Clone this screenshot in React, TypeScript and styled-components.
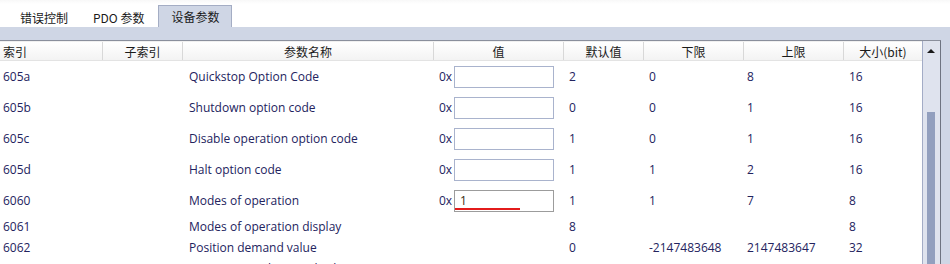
import React from "react";
import styled, { createGlobalStyle } from "styled-components";

const GlobalStyle = createGlobalStyle`
  html, body {
    margin: 0;
    padding: 0;
    background: #ffffff;
  }
  body {
    font-family: "Open Sans", "Noto Sans CJK SC", sans-serif;
    font-size: 12px;
    color: #23235e;
  }
`;

type Row = {
  index: string;
  name: string;
  hasInput: boolean;
  value?: string;
  marked?: boolean;
  def: string;
  min: string;
  max: string;
  size: string;
};

const rows: Row[] = [
  { index: "605a", name: "Quickstop Option Code", hasInput: true, def: "2", min: "0", max: "8", size: "16" },
  { index: "605b", name: "Shutdown option code", hasInput: true, def: "0", min: "0", max: "1", size: "16" },
  { index: "605c", name: "Disable operation option code", hasInput: true, def: "1", min: "0", max: "1", size: "16" },
  { index: "605d", name: "Halt option code", hasInput: true, def: "1", min: "1", max: "2", size: "16" },
  { index: "6060", name: "Modes of operation", hasInput: true, value: "1", marked: true, def: "1", min: "1", max: "7", size: "8" },
  { index: "6061", name: "Modes of operation display", hasInput: false, def: "8", min: "", max: "", size: "8" },
  { index: "6062", name: "Position demand value", hasInput: false, def: "0", min: "-2147483648", max: "2147483647", size: "32" },
  { index: "6063", name: "Position actual internal value", hasInput: false, def: "0", min: "-2147483648", max: "2147483647", size: "32" },
];

const tabs = ["错误控制", "PDO 参数", "设备参数"];
const COLS = "103px 80px 251px 130px 80px 100px 100px 78px";

export default function App() {
  return (
    <Page>
      <GlobalStyle />
      <TabStrip>
        {tabs.map((t, i) => (
          <Tab key={t} $active={i === 2}>
            {t}
          </Tab>
        ))}
      </TabStrip>
      <Band>
        <Frame>
          <Table>
            <HeaderRow>
              <HeadCell $align="left">索引</HeadCell>
              <HeadCell>子索引</HeadCell>
              <HeadCell>参数名称</HeadCell>
              <HeadCell>值</HeadCell>
              <HeadCell>默认值</HeadCell>
              <HeadCell>下限</HeadCell>
              <HeadCell>上限</HeadCell>
              <HeadCell>大小(bit)</HeadCell>
            </HeaderRow>
            {rows.map((r) => (
              <DataRow key={r.index} $tall={r.hasInput}>
                <Cell>{r.index}</Cell>
                <Cell />
                <Cell $pad={6}>{r.name}</Cell>
                <ValueCell>
                  {r.hasInput && (
                    <>
                      <Prefix>0x</Prefix>
                      <ValueBox $focused={!!r.marked}>
                        {r.value}
                        {r.marked && <Squiggle />}
                      </ValueBox>
                    </>
                  )}
                </ValueCell>
                <Cell $pad={5}>{r.def}</Cell>
                <Cell $pad={5}>{r.min}</Cell>
                <Cell $pad={3}>{r.max}</Cell>
                <Cell $pad={5}>{r.size}</Cell>
              </DataRow>
            ))}
          </Table>
          <ScrollBar>
            <ArrowUp />
            <Thumb />
          </ScrollBar>
        </Frame>
      </Band>
    </Page>
  );
}

const Page = styled.div`
  width: 950px;
  height: 264px;
  overflow: hidden;
  display: flex;
  flex-direction: column;
`;

const TabStrip = styled.div`
  height: 27px;
  display: flex;
  align-items: flex-end;
  padding-left: 7px;
  background: linear-gradient(#f8f8f8 0, #ffffff 4px);
  font-family: "Noto Sans CJK SC", "Open Sans", sans-serif;
  font-size: 12px;
  color: #1a1a1a;
`;

const Tab = styled.div<{ $active?: boolean }>`
  height: ${(p) => (p.$active ? "22px" : "20px")};
  padding: 0 12px;
  display: flex;
  align-items: center;
  box-sizing: border-box;
  background: ${(p) => (p.$active ? "#cfd6e5" : "transparent")};
  border: 1px solid ${(p) => (p.$active ? "#a4adc4" : "transparent")};
  border-bottom: none;
  &:nth-child(2) {
    padding: 0 13px 0 11px;
  }
  &:nth-child(3) {
    padding: 0 12px;
    min-width: 72px;
    padding-bottom: 1px;
  }
`;

const Band = styled.div`
  flex: 1;
  background: #cfd6e5;
  padding: 13px 9px 0 0;
  display: flex;
  min-height: 0;
`;

const Frame = styled.div`
  flex: 1;
  display: flex;
  background: #ffffff;
  border-top: 1px solid #8a8f9c;
  border-right: 1px solid #6e7380;
  min-height: 0;
  overflow: hidden;
`;

const Table = styled.div`
  width: 922px;
  display: flex;
  flex-direction: column;
`;

const HeaderRow = styled.div`
  display: grid;
  grid-template-columns: ${COLS};
  height: 21px;
  background: linear-gradient(#ffffff, #f3f3f3);
  border-top: 1px solid #f0f0f0;
  border-bottom: 1px solid #e3e3e3;
  box-sizing: border-box;
  font-family: "Noto Sans CJK SC", "Open Sans", sans-serif;
  color: #1a1a1a;
`;

const HeadCell = styled.div<{ $align?: "left" | "center" }>`
  display: flex;
  align-items: center;
  padding-top: 1px;
  justify-content: ${(p) => (p.$align === "left" ? "flex-start" : "center")};
  padding-left: ${(p) => (p.$align === "left" ? "3px" : "0")};
  border-right: 1px solid #d8d8d8;
  white-space: nowrap;
  &:last-child {
    border-right: none;
  }
`;

const DataRow = styled.div<{ $tall?: boolean }>`
  display: grid;
  grid-template-columns: ${COLS};
  height: ${(p) => (p.$tall ? "31px" : "21px")};
  flex-shrink: 0;
`;

const Cell = styled.div<{ $pad?: number }>`
  display: flex;
  align-items: center;
  padding-left: ${(p) => p.$pad ?? 3}px;
  white-space: nowrap;
`;

const ValueCell = styled.div`
  display: flex;
  align-items: center;
  padding-left: 5px;
  gap: 1px;
`;

const Prefix = styled.span`
  width: 14px;
`;

const ValueBox = styled.div<{ $focused?: boolean }>`
  position: relative;
  width: 100px;
  height: 22px;
  box-sizing: border-box;
  border: 1px solid ${(p) => (p.$focused ? "#9c9c9c" : "#a9b3cd")};
  background: #ffffff;
  display: flex;
  align-items: center;
  padding-left: 5px;
  color: #3a2a10;
`;

const Squiggle = styled.span`
  position: absolute;
  left: 0;
  bottom: 1px;
  width: 65px;
  height: 2px;
  background: #e31b1b;
`;

const ScrollBar = styled.div`
  width: 18px;
  flex-shrink: 0;
  background: #dfe3ee;
  border-left: 1px solid #a3acc6;
  box-sizing: border-box;
  display: flex;
  flex-direction: column;
  align-items: center;
`;

const ArrowUp = styled.div`
  margin-top: 8px;
  width: 0;
  height: 0;
  border-left: 4px solid transparent;
  border-right: 4px solid transparent;
  border-bottom: 4px solid #1a1a1a;
  margin-left: -2px;
`;

const Thumb = styled.div`
  margin-top: 59px;
  width: 8px;
  flex: 1;
  background: #929fbe;
  margin-left: -2px;
`;
